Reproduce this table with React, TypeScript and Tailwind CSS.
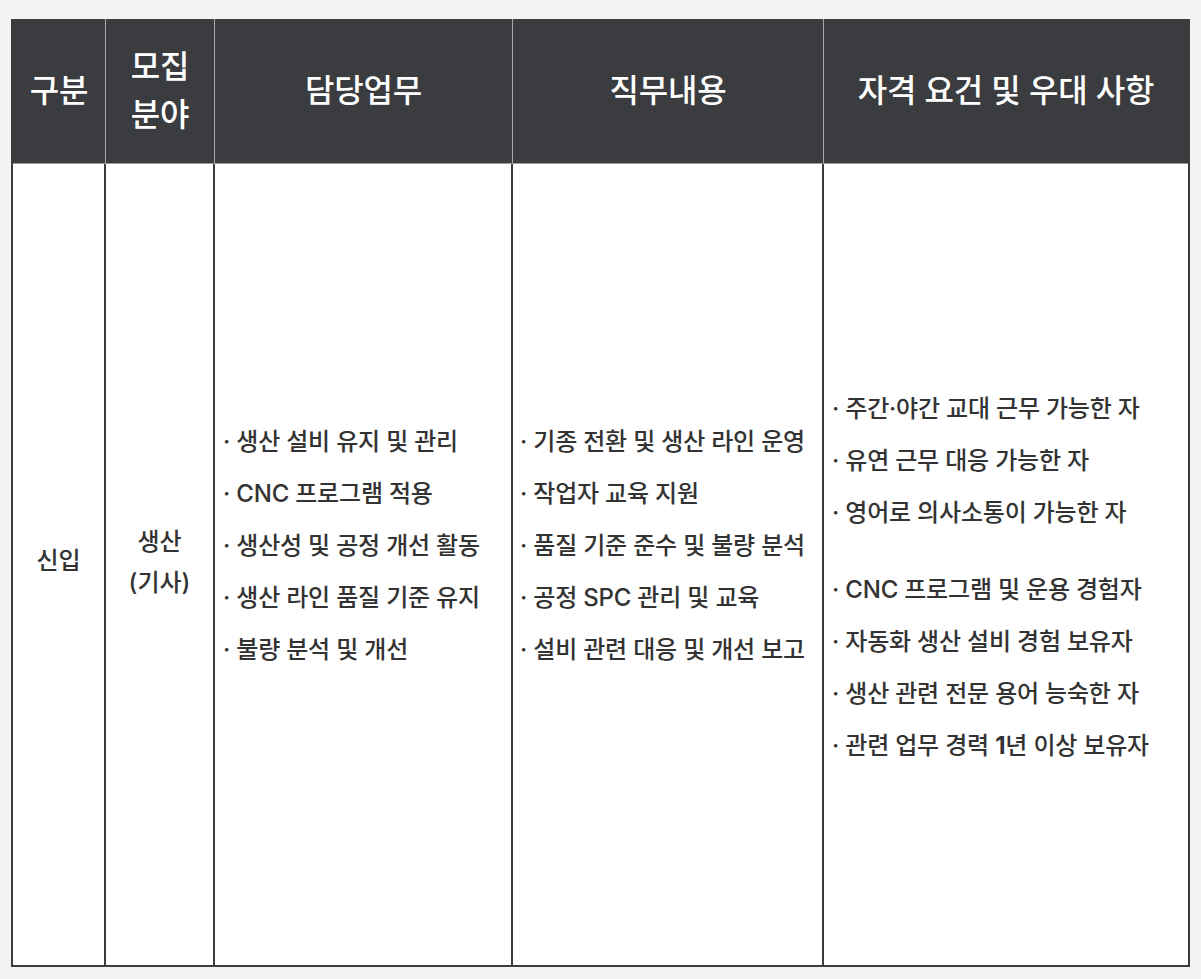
const font = { fontFamily: 'Inter, "Noto Sans CJK KR", sans-serif' };

const duties = [
  '생산 설비 유지 및 관리',
  'CNC 프로그램 적용',
  '생산성 및 공정 개선 활동',
  '생산 라인 품질 기준 유지',
  '불량 분석 및 개선',
];

const tasks = [
  '기종 전환 및 생산 라인 운영',
  '작업자 교육 지원',
  '품질 기준 준수 및 불량 분석',
  '공정 SPC 관리 및 교육',
  '설비 관련 대응 및 개선 보고',
];

const required = ['주간·야간 교대 근무 가능한 자', '유연 근무 대응 가능한 자', '영어로 의사소통이 가능한 자'];

function BulletList({ items }: { items: React.ReactNode[] }) {
  return (
    <ul className="text-[24px] leading-[52px] font-medium tracking-[-0.2px] text-[#333]">
      {items.map((item, i) => (
        <li key={i} className="whitespace-nowrap">
          · {item}
        </li>
      ))}
    </ul>
  );
}

export default function App() {
  const preferred: React.ReactNode[] = [
    'CNC 프로그램 및 운용 경험자',
    '자동화 생산 설비 경험 보유자',
    '생산 관련 전문 용어 능숙한 자',
    <>
      관련 업무 경력 <span className="font-bold">1</span>년 이상 보유자
    </>,
  ];

  return (
    <div className="min-h-screen bg-[#f4f4f4] pt-[19px] pl-[11px]" style={font}>
      <div className="w-[1179px] border-x-2 border-b-2 border-[#3c3c3c] bg-white">
        {/* header */}
        <div className="flex h-[144px] bg-[#3a3c3f] text-white text-[32px] font-medium tracking-[-0.2px]">
          <div className="w-[93px] flex items-center justify-center border-r border-[#a8a8a8]">구분</div>
          <div className="w-[109px] flex flex-col items-center justify-center leading-[48px] border-r border-[#a8a8a8]">
            <span>모집</span>
            <span>분야</span>
          </div>
          <div className="w-[298px] flex items-center justify-center border-r border-[#a8a8a8]">담당업무</div>
          <div className="w-[311px] flex items-center justify-center border-r border-[#a8a8a8]">직무내용</div>
          <div className="flex-1 flex items-center justify-center">자격 요건 및 우대 사항</div>
        </div>

        {/* body */}
        <div className="flex h-[802px] border-t border-[#9a9a9a] text-[#333]">
          <div className="w-[93px] flex items-center justify-center pb-[8px] border-r-2 border-[#3c3c3c] text-[24px] font-medium">
            신입
          </div>
          <div className="w-[109px] flex flex-col items-center justify-center pb-[5px] border-r-2 border-[#3c3c3c] text-[24px] font-medium leading-[41px]">
            <span>생산</span>
            <span>(기사)</span>
          </div>
          <div className="w-[298px] flex items-center pl-[8px] pb-[38px] border-r-2 border-[#3c3c3c]">
            <BulletList items={duties} />
          </div>
          <div className="w-[311px] flex items-center pl-[7px] pb-[38px] border-r-2 border-[#3c3c3c]">
            <BulletList items={tasks} />
          </div>
          <div className="flex-1 flex flex-col justify-center pl-[8px] pt-[26px]">
            <BulletList items={required} />
            <div className="mt-[25px]">
              <BulletList items={preferred} />
            </div>
          </div>
        </div>
      </div>
    </div>
  );
}
